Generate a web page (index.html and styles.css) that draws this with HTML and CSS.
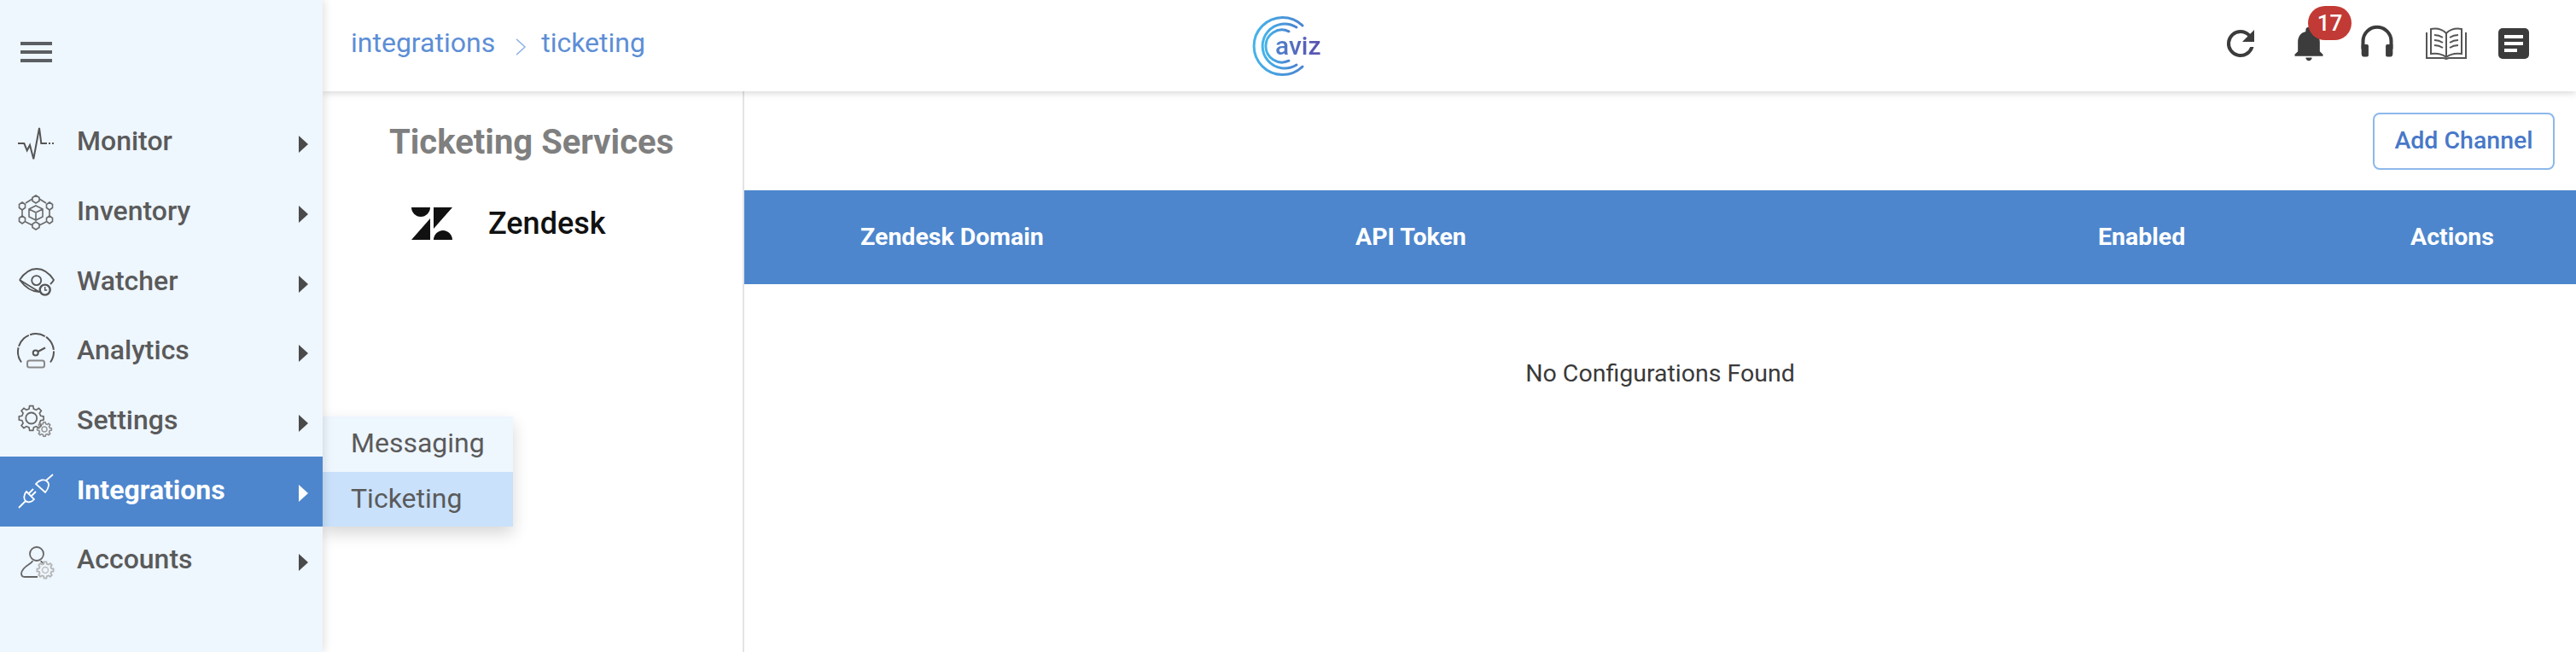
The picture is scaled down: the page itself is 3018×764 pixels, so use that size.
FILE: index.html
```html
<!DOCTYPE html>
<html lang="en">
<head>
<meta charset="utf-8">
<title>Ticketing</title>
<link rel="stylesheet" href="styles.css">
</head>
<body>
<svg class="defs" width="0" height="0">
  <defs>
    <polygon id="gear" points="-3,-12.1 -2.3,-16 2.3,-16 3,-12.1 6.43,-10.68 9.69,-12.94 12.94,-9.69 10.68,-6.43 12.1,-3 16,-2.3 16,2.3 12.1,3 10.68,6.43 12.94,9.69 9.69,12.94 6.43,10.68 3,12.1 2.3,16 -2.3,16 -3,12.1 -6.43,10.68 -9.69,12.94 -12.94,9.69 -10.68,6.43 -12.1,3 -16,2.3 -16,-2.3 -12.1,-3 -10.68,-6.43 -12.94,-9.69 -9.69,-12.94 -6.43,-10.68"/>
    <linearGradient id="lg" x1="0" y1="0" x2="1" y2="0"><stop offset="0" stop-color="#45b4ea"/><stop offset="1" stop-color="#4a84d0"/></linearGradient>
  </defs>
</svg>
<div class="app">
  <aside class="sidebar">
    <div class="burger"><span></span><span></span><span></span></div>
    <nav class="menu">
      <a class="item">
        <svg class="ico" viewBox="0 0 44 44" fill="none" stroke="#555" stroke-width="2"><path d="M1 23h7.300l3.400 8.300 3.300-6.300 4.300 16.300L26 5l2.300 18H35"/><path d="M37 23h2M41 23h2"/></svg>
        <span class="label">Monitor</span><i class="caret"></i>
      </a>
      <a class="item">
        <svg class="ico" viewBox="0 0 44 44" fill="none" stroke="#6a6a6a" stroke-width="1.6"><path d="M22 14l8 4v9l-8 4-8-4v-9zM14 18l8 4 8-4M22 22v9"/><path d="M22 2l4 2.500v4L22 11l-4-2.500v-4zM38 10l3.500 2.500v4L38 19l-3.500-2.500v-4zM38 26l3.500 2.500v4L38 35l-3.500-2.500v-4zM22 33l4 2.500v4L22 42l-4-2.500v-4zM6 26l3.500 2.500v4L6 35l-3.500-2.500v-4zM6 10l3.500 2.500v4L6 19l-3.500-2.500v-4z"/><path d="M26 6l8 5M18 6l-8 5M38 19v7M6 19v7M34 33l-8 4M10 33l8 4"/></svg>
        <span class="label">Inventory</span><i class="caret"></i>
      </a>
      <a class="item">
        <svg class="ico" viewBox="0 0 44 44" fill="none" stroke="#555" stroke-width="1.800"><path d="M3 19C9 10 15 6 23 6s14 4 20 13c-1 2-2 3-4 5M26 33C17 33 9 27 3 19z"/><circle cx="22.700" cy="19.600" r="5.500"/><circle cx="32.700" cy="30.600" r="6" stroke-width="2.400"/><path d="M32.700 27v4h2.500" stroke-width="1.400"/></svg>
        <span class="label">Watcher</span><i class="caret"></i>
      </a>
      <a class="item">
        <svg class="ico" viewBox="0 0 44 44" fill="none" stroke="#555" stroke-width="2"><path d="M5 34.500A21 21 0 1 1 39 34.500" stroke-dasharray="18 1.500"/><circle cx="21.700" cy="23.500" r="3"/><path d="M24.500 22l8.500-4.500"/><rect x="12" y="32.500" width="20" height="8" rx="2.500" stroke="#888"/></svg>
        <span class="label">Analytics</span><i class="caret"></i>
      </a>
      <a class="item">
        <svg class="ico" viewBox="0 0 44 44" fill="none" stroke="#666"><use href="#gear" transform="translate(16.700 18) scale(.9)" stroke-width="1.800"/><circle cx="16.700" cy="18" r="6.500" stroke-width="1.800"/><use href="#gear" transform="translate(32 31) scale(.52)" stroke="#8a8a8a" stroke-width="3"/><circle cx="32" cy="31" r="3" stroke="#999" stroke-width="1.500"/></svg>
        <span class="label">Settings</span><i class="caret"></i>
      </a>
      <a class="item active">
        <svg class="ico" viewBox="0 0 44 44" fill="none" stroke="#fff" stroke-width="1.800"><path d="M2 41l8-8M11 22l9 9C17 35 12 35 10 33 8 31 7 26 11 22zM14 24l5-5M17 27l5-5M22 13l11 10C38 17 38 12 35 10 32 7 26 8 22 13zM34 9l8-7"/></svg>
        <span class="label">Integrations</span><i class="caret"></i>
      </a>
      <a class="item">
        <svg class="ico" viewBox="0 0 44 44" fill="none" stroke="#666" stroke-width="1.800"><circle cx="23" cy="14" r="8"/><path d="M18 22c0 4-12 6-13 15 0 3 1 4 4 4h15M28 22c0 1 1 2 3 3"/><use href="#gear" transform="translate(33 33) scale(.6)" stroke="#b5b5b5" stroke-width="3"/><circle cx="33" cy="33" r="3.500" stroke="#c0c0c0" stroke-width="1.500"/></svg>
        <span class="label">Accounts</span><i class="caret"></i>
      </a>
    </nav>
  </aside>

  <div class="submenu">
    <div class="sub-item">Messaging</div>
    <div class="sub-item current">Ticketing</div>
  </div>

  <div class="main">
    <header class="topbar">
      <div class="crumbs">
        <span>integrations</span>
        <svg class="crumb-sep" viewBox="0 0 14 22" fill="none" stroke="#8fb3e6" stroke-width="1.600"><path d="M1 1l11 10L1 21"/></svg>
        <span>ticketing</span>
      </div>
      <div class="logo">
        <svg class="logo-mark" viewBox="0 0 62 72" fill="none" stroke-width="3" stroke-linecap="round">
          <path stroke="url(#lg)" d="M60 12A33.500 33.500 0 1 0 60 60"/>
          <path stroke="url(#lg)" d="M53 14A26 26 0 1 0 53 58"/>
          <path stroke="url(#lg)" d="M44 18.800A19 19 0 1 0 44 53.200"/>
        </svg>
        <span class="logo-text">aviz</span>
      </div>
      <div class="tools">
        <svg class="t-reload" viewBox="0 0 24 24" fill="#3c3c3c"><path d="M17.650 6.350A7.960 7.960 0 0 0 12 4a8 8 0 1 0 7.730 10h-2.080A6 6 0 1 1 12 6c1.660 0 3.140.69 4.220 1.780L13 11h7V4z"/></svg>
        <div class="bell">
          <svg class="t-bell" viewBox="0 0 24 24" fill="#3c3c3c"><path d="M12 23c1.100 0 2-.9 2-2h-4c0 1.100.9 2 2 2zm7-6v-6c0-3.300-1.800-6-5-6.700V3.500a2 2 0 0 0-4 0v.8C6.800 5 5 7.700 5 11v6l-2 2v1h18v-1z"/></svg>
          <span class="badge">17</span>
        </div>
        <svg class="t-head" viewBox="0 1.500 24 24" fill="none"><path d="M3 17v-5a9 9 0 0 1 18 0v5" stroke="#3c3c3c" stroke-width="2.200"/><path d="M2 14h3.500a1 1 0 0 1 1 1v6a1 1 0 0 1-1 1H4a2 2 0 0 1-2-2zM22 14h-3.500a1 1 0 0 0-1 1v6a1 1 0 0 0 1 1H20a2 2 0 0 0 2-2z" fill="#3c3c3c"/></svg>
        <svg class="t-book" viewBox="0 0 50 38" fill="none" stroke="#555" stroke-width="2"><path d="M25 7C20 2 13 1 7 2v29c7-1 13 0 18 4 5-4 11-5 18-4V2c-6-1-13 0-18 5zM25 7v28"/><path d="M2 6v30h20l3 1 3-1h20V6"/><path d="M11 9c3 0 7 1 10 3M11 15c3 0 7 1 10 3M11 21c3 0 7 1 10 3M39 9c-3 0-7 1-10 3M39 15c-3 0-7 1-10 3M39 21c-3 0-7 1-10 3" stroke-width="2"/></svg>
        <svg class="t-notes" viewBox="0 0 36 36"><rect width="36" height="36" rx="5" fill="#3c3c3c"/><path d="M7 8h22v4H7zM7 16h22v4H7zM7 24h15v4H7z" fill="#fff"/></svg>
      </div>
    </header>

    <div class="content">
      <section class="services">
        <h2 class="services-title">Ticketing Services</h2>
        <div class="service">
          <svg class="zd" viewBox="0 0 48 38" fill="#111"><path d="M0 0h22c0 6-5 11-11 11S0 6 0 0zM22 13v25H0zM26 38c0-6 5-11 11-11s11 5 11 11zM26 25V0h22z"/></svg>
          <span>Zendesk</span>
        </div>
      </section>
      <section class="panel">
        <div class="actions"><button class="add">Add Channel</button></div>
        <div class="thead">
          <div>Zendesk Domain</div>
          <div>API Token</div>
          <div>Enabled</div>
          <div>Actions</div>
        </div>
        <p class="empty">No Configurations Found</p>
      </section>
    </div>
  </div>
</div>
</body>
</html>
```
FILE: styles.css
```css
* { box-sizing: border-box; }
html, body { margin: 0; height: 100%; overflow: hidden; background: #fff; }
body { font-family: Roboto, "Liberation Sans", sans-serif; color: #333; }
.defs { display: block; height: 0; }
.app { display: flex; width: 3018px; height: 764px; position: relative; }

.sidebar {
  width: 378px; flex: none; background: #eef6fe;
  box-shadow: 2px 0 10px rgba(0,0,0,.12); position: relative; z-index: 3;
}
.burger { display: flex; flex-direction: column; gap: 6px; padding: 49px 0 0 24px; height: 126.500px; }
.burger span { display: block; width: 37px; height: 4px; background: #5b5f63; }
.menu { display: flex; flex-direction: column; }
.item {
  display: flex; align-items: center; height: 81.700px; padding-left: 20px; padding-right: 17px;
  font-size: 32px; font-weight: 500; color: #5a5a5a;
}
.item.active { background: #4d86cd; color: #fff; font-weight: 700; }
.ico { width: 44px; height: 44px; flex: none; }
.label { margin-left: 26px; flex: 1; padding-bottom: 4px; }
.caret {
  width: 0; height: 0; border-left: 11px solid #4a4a4a;
  border-top: 10px solid transparent; border-bottom: 10px solid transparent; margin-top: 4px;
}
.item.active .caret { border-left-color: #fff; }

.submenu {
  position: absolute; left: 378px; top: 488px; width: 223px; z-index: 2;
  background: #eef6fe; box-shadow: 0 8px 18px rgba(0,0,0,.16);
}
.sub-item { height: 64.500px; display: flex; align-items: center; padding: 0 0 2px 33px; font-size: 32px; color: #5a5a5a; }
.sub-item.current { background: #c9e1fb; }

.main { flex: 1; display: flex; flex-direction: column; min-width: 0; }
.topbar {
  height: 107px; flex: none; display: grid; grid-template-columns: 1055px auto 1fr; align-items: center;
  padding: 0 55px 0 33px; background: #fff; box-shadow: 0 2px 8px rgba(0,0,0,.16); position: relative; z-index: 1;
}
.crumbs { display: flex; align-items: center; font-size: 32px; color: #5d8ed6; margin-top: -8px; }
.crumb-sep { width: 13px; height: 20px; margin: 10px 17px 0 24px; }
.logo { display: flex; align-items: center; }
.logo-mark { width: 62px; height: 72px; flex: none; }
.logo-text {
  font-size: 30px; font-weight: 500; margin-left: -34px;
  background: linear-gradient(90deg, #4f82cc, #5a4fb0); -webkit-background-clip: text; background-clip: text; color: transparent;
}
.tools { display: flex; align-items: center; justify-content: flex-end; margin-top: -5px; }
.t-reload { width: 48px; height: 48px; }
.bell { position: relative; width: 44px; height: 44px; margin-left: 34px; }
.t-bell { width: 44px; height: 44px; }
.badge {
  position: absolute; left: 21px; top: -22px; width: 51px; height: 40px; border-radius: 20px;
  background: #c23a35; color: #fff; font-size: 26px; font-weight: 500; display: flex; align-items: center; justify-content: center;
}
.t-head { width: 44px; height: 44px; margin-left: 36px; }
.t-book { width: 50px; height: 38px; margin-left: 34px; }
.t-notes { width: 36px; height: 36px; margin-left: 36px; }

.content { flex: 1; display: flex; min-height: 0; }
.services { width: 494px; flex: none; border-right: 2px solid #e3e3e6; padding-top: 36px; }
.services-title { margin: 0 0 0 78px; font-size: 40px; line-height: 48px; font-weight: 700; color: #7f7f7f; }
.service { display: flex; align-items: center; margin: 50px 0 0 104px; font-size: 36px; font-weight: 500; color: #111; }
.zd { width: 48px; height: 38px; margin-right: 42px; }

.panel { flex: 1; min-width: 0; }
.actions { display: flex; justify-content: flex-end; padding: 25px 25px 0 0; height: 116px; }
.add {
  width: 213px; height: 67px; background: #fff; border: 2px solid #8db8ea; border-radius: 8px; padding: 0 0 3px;
  color: #4878c8; font: 500 28.500px Roboto, sans-serif;
}
.thead {
  height: 110px; background: #4d86cd; color: #fff; display: grid; align-items: center;
  grid-template-columns: 580px 870px 366px 1fr; padding: 0 0 2px 136px; font-size: 28.500px; font-weight: 700;
}
.empty { margin: 85px 0 0; text-align: center; font-size: 28.500px; line-height: 40px; color: #3a3a3a; }
```
